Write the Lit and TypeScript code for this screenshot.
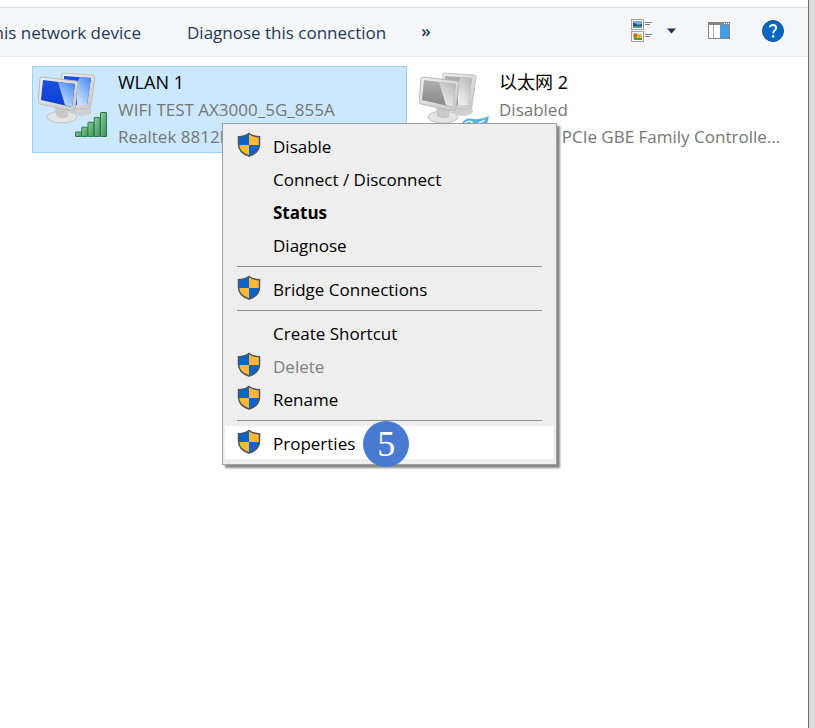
import { LitElement, html, css, svg, nothing } from "lit";
import { customElement, property } from "lit/decorators.js";

interface MenuEntry {
  label: string;
  shield?: boolean;
  bold?: boolean;
  disabled?: boolean;
  current?: boolean;
  step?: string;
}

const menuGroups: MenuEntry[][] = [
  [
    { label: "Disable", shield: true },
    { label: "Connect / Disconnect" },
    { label: "Status", bold: true },
    { label: "Diagnose" },
  ],
  [{ label: "Bridge Connections", shield: true }],
  [
    { label: "Create Shortcut" },
    { label: "Delete", shield: true, disabled: true },
    { label: "Rename", shield: true },
  ],
  [{ label: "Properties", shield: true, current: true, step: "5" }],
];

const shieldIcon = html`
  <svg width="24" height="26" viewBox="0 0 24 26" aria-hidden="true">
    <clipPath id="s"><path d="M12 1C9 3.4 5.300 4.400 1 4.400V12C1 18 5.500 22.500 12 24.500C18.500 22.500 23 18 23 12V4.400C18.700 4.400 15 3.400 12 1Z" /></clipPath>
    <g clip-path="url(#s)">
      <path fill="#0a64c8" d="M0 0h12v13H0zM12 13h12v13H12z" />
      <path fill="#fdb934" d="M12 0h12v13H12zM0 13h12v13H0z" />
    </g>
    <path fill="none" stroke="#4c5560" stroke-width="1.500" d="M12 1.500C9 3.800 5.500 4.600 1.500 4.700V12C1.500 17.700 5.800 22 12 24C18.200 22 22.500 17.700 22.500 12V4.700C18.500 4.600 15 3.800 12 1.500Z" />
  </svg>
`;

@customElement("connection-icon")
class ConnectionIcon extends LitElement {
  @property({ type: Boolean }) off = false;

  static styles = css`
    :host { display: block; }
    svg { display: block; }
  `;

  render() {
    const deep = this.off ? "#b0b0b0" : "#1a4fe0";
    const mid = this.off ? "#858585" : "#0a3fd6";
    const top = this.off ? "#b4b4b4" : "#3f82f2";
    const pale = this.off ? "#ececec" : "#c4e0fd";
    return html`
      <svg width="70" height="70" viewBox="0 0 70 70" aria-hidden="true">
        <defs>
          <linearGradient id="deep" x1="0" y1="0" x2="0" y2="1">
            <stop offset="0" stop-color=${deep} />
            <stop offset="1" stop-color=${mid} />
          </linearGradient>
          <linearGradient id="pale" x1="1" y1="0" x2=".4" y2="1">
            <stop offset="0" stop-color=${top} />
            <stop offset="1" stop-color=${pale} />
          </linearGradient>
          <linearGradient id="case" x1="0" y1="0" x2="1" y2="1">
            <stop offset="0" stop-color="#f0f0f0" />
            <stop offset="1" stop-color="#c6c6c6" />
          </linearGradient>
          <linearGradient id="bar" x1="0" y1="0" x2="1" y2="1">
            <stop offset="0" stop-color="#8ccb98" />
            <stop offset="1" stop-color="#3d9258" />
          </linearGradient>
        </defs>
        <ellipse cx="44" cy="39" rx="10" ry="5" fill="#d0d0d0" />
        <path d="M24 1L55 3Q57 3 57 5L53 34Q53 37 50 37L39 37L24 30Z" fill="url(#case)" stroke="#c2c2c2" />
        <path d="M26 4L53 6L49 33L38 33V10L26 8Z" fill="url(#deep)" />
        <path d="M42 5L53 6L49 33L39 33V10Z" fill="url(#pale)" />
        <ellipse cx="24" cy="45" rx="15" ry="6" fill="#e4e4e4" stroke="#c4c4c4" />
        <path d="M17 34H31L30 45Q24 48 18 44Z" fill="#c9c9c9" />
        <path d="M4 5L38 9Q41 10 40 12L37 37Q36 39 34 39L2 32Q0 31 0 30L2 7Q2 5 4 5Z" fill="url(#case)" stroke="#b8b8b8" />
        <path d="M5 8L37 12L34 35L3 28Z" fill="url(#deep)" />
        <path d="M20 10L37 12L34 35L27 33Z" fill="url(#pale)" />
        ${this.off
          ? svg`
              <path d="M42 52Q47 45 54 47Q60 48 70 44L67 56H44Z" fill="#58b0de" />
              <path d="M45 52Q49 48 53 50L50 56M56 53L66 48" fill="none" stroke="#dff2fb" stroke-width="1.500" />
            `
          : [0, 1, 2, 3, 4].map(
              (i) => svg`<rect x=${37.5 + i * 6.25} y=${60 - i * 4.875} width="6" height=${4.5 + i * 4.875} rx=".5" fill="url(#bar)" stroke="#26784a" />`
            )}
      </svg>
    `;
  }
}

@customElement("connection-tile")
class ConnectionTile extends LitElement {
  @property() name = "";
  @property() status = "";
  @property() device = "";
  @property({ type: Boolean }) off = false;
  @property({ type: Boolean, reflect: true }) selected = false;

  static styles = css`
    :host {
      display: flex;
      gap: 10px;
      padding: 2px 4px 2px 5px;
      border: 1px solid transparent;
      min-width: 0;
      box-sizing: border-box;
    }
    :host([selected]) { background: #cce8ff; border-color: #99d1ff; }
    .icon { padding-top: 3px; }
    .text { min-width: 0; flex: 1; }
    .line {
      margin: 0;
      line-height: 27px;
      color: #767676;
      white-space: nowrap;
      overflow: hidden;
    }
    .name { color: #000; font-size: 18px; }
  `;

  render() {
    return html`
      <connection-icon class="icon" ?off=${this.off}></connection-icon>
      <div class="text">
        <p class="line name">${this.name}</p>
        <p class="line">${this.status}</p>
        <p class="line">${this.device}</p>
      </div>
    `;
  }
}

@customElement("context-menu")
class ContextMenu extends LitElement {
  static styles = css`
    :host {
      display: block;
      box-sizing: border-box;
      width: 335px;
      padding: 5px 2px;
      background: #eee;
      border: 1px solid #a0a0a0;
      box-shadow: 3px 3px 2px #00000078;
    }
    .group + .group::before {
      content: "";
      display: block;
      height: 1px;
      margin: 5px 12px;
      background: #919191;
    }
    .item {
      display: flex;
      align-items: center;
      width: 100%;
      height: 33px;
      padding: 0 0 0 12px;
      border: 0;
      background: none;
      font: inherit;
      color: #000;
      text-align: left;
    }
    .item:disabled { color: #808080; }
    .bold { font-weight: 700; }
    .current { background: #fff; }
    .slot { width: 36px; height: 28px; flex: none; }
    .label { padding-top: 2px; }
    .step {
      display: flex;
      align-items: center;
      justify-content: center;
      width: 46px;
      height: 46px;
      margin: 2px 0 0 8px;
      border-radius: 50%;
      background: #487bd0;
      color: #fff;
      font: 36px "Liberation Serif", serif;
    }
  `;

  render() {
    return html`${menuGroups.map(
      (group) => html`
        <div class="group" role="group">
          ${group.map(
            (e) => html`
              <button
                class="item ${e.bold ? "bold" : ""} ${e.current ? "current" : ""}"
                role="menuitem"
                ?disabled=${e.disabled}
              >
                <span class="slot">${e.shield ? shieldIcon : nothing}</span>
                <span class="label">${e.label}</span>
                ${e.step ? html`<span class="step">${e.step}</span>` : nothing}
              </button>
            `
          )}
        </div>
      `
    )}`;
  }
}

@customElement("app-root")
class AppRoot extends LitElement {
  static styles = css`
    :host {
      display: flex;
      min-height: 100vh;
      background: #dcdcdc;
      font: 17px "Open Sans", "Noto Sans CJK SC", sans-serif;
    }
    .window {
      flex: 1;
      min-width: 0;
      margin-right: 6px;
      padding-top: 7px;
      box-sizing: border-box;
      background: #fff;
      border-right: 1px solid #707070;
    }
    .toolbar {
      display: flex;
      align-items: center;
      height: 48px;
      padding-right: 24px;
      background: #f5f6f7;
      border-top: 1px solid #dadbdc;
      border-bottom: 1px solid #e6e7e8;
    }
    .command {
      flex: none;
      padding: 0;
      border: 0;
      background: none;
      font: inherit;
      color: #1e395b;
      white-space: nowrap;
    }
    .clipped {
      display: flex;
      justify-content: flex-end;
      width: 141px;
      margin-right: 46px;
      overflow: hidden;
    }
    .more { margin: 0 auto 4px 35px; font-weight: 600; }
    .icon { display: flex; margin-bottom: 2px; }
    .arrow { margin: 0 31px 2px 14px; }
    .help { margin-left: 32px; }
    .pane { position: relative; padding: 9px 20px 0 32px; }
    .tiles {
      display: grid;
      grid-template-columns: repeat(auto-fill, 375px);
      gap: 6px;
      margin-right: -20px;
    }
    .menu { position: absolute; left: 222px; top: 66px; }
  `;

  render() {
    return html`
      <main class="window">
        <div class="toolbar" role="toolbar">
          <button class="command clipped">Disable this network device</button>
          <button class="command">Diagnose this connection</button>
          <button class="command more" aria-label="More commands">»</button>
          <button class="command icon" aria-label="Change view">
            <svg width="22" height="24" viewBox="0 0 22 24">
              <g fill="#fff" stroke="#a3a3a3">
                <rect x=".5" y=".5" width="12" height="10" />
                <rect x=".5" y="12.500" width="12" height="10" />
              </g>
              <path fill="#6fb3e6" d="M2 2h9v4H2z" />
              <path fill="#1b4f77" d="M2 4q3 0 5 2l4-1v4H2z" />
              <path fill="#4f9a8a" d="M2 7h9v2H2z" />
              <path fill="#d5e8f5" d="M2 14h9v7H2z" />
              <circle cx="4.500" cy="16.500" r="2.200" fill="#d2691e" />
              <path fill="#4f9e3a" d="M3 18l4 1v2H3z" />
              <circle cx="8.500" cy="17.500" r="2.300" fill="#ddb321" />
              <path fill="#4f9e3a" d="M7 19h4v2H7z" />
              <path stroke="#7d8187" d="M14 3.500h7M14 5.500h5M14 15.500h7M14 17.500h5" />
            </svg>
          </button>
          <button class="command icon arrow" aria-label="More options">
            <svg width="10" height="6" viewBox="0 0 10 6"><path fill="#1a3457" d="M0 .5h9L4.500 5.500z" /></svg>
          </button>
          <button class="command icon" aria-label="Preview pane">
            <svg width="22" height="18" viewBox="0 0 22 18">
              <rect x=".5" y=".5" width="21" height="16" fill="#fff" stroke="#858585" />
              <path fill="#858585" d="M0 0h22v3H0z" />
              <path fill="#fff" d="M16 1h1v1h-1zM18 1h1v1h-1zM20 1h1v1h-1z" />
              <path fill="#a8a8a8" d="M5 3h1v13H5z" />
              <path fill="#429ce3" d="M12 3h9v13h-9z" />
            </svg>
          </button>
          <button class="command icon help" aria-label="Help">
            <svg width="22" height="22" viewBox="0 0 22 22">
              <circle cx="11" cy="11" r="10.500" fill="#0067c5" stroke="#1b4f86" />
              <path d="M7.800 7.400Q8.200 4.900 11.100 4.900Q14.200 5 14.200 7.700Q14.200 9.200 12.700 10.300Q11.200 11.400 11.200 13.400" fill="none" stroke="#fff" stroke-width="2" />
              <circle cx="11.200" cy="16.400" r="1.300" fill="#fff" />
            </svg>
          </button>
        </div>
        <div class="pane">
          <div class="tiles">
            <connection-tile selected name="WLAN 1" status="WIFI TEST AX3000_5G_855A" device="Realtek 8812BU"></connection-tile>
            <connection-tile off name="以太网 2" status="Disabled" device="Realtek PCIe GBE Family Controlle..."></connection-tile>
          </div>
          <context-menu class="menu" role="menu"></context-menu>
        </div>
      </main>
    `;
  }
}
